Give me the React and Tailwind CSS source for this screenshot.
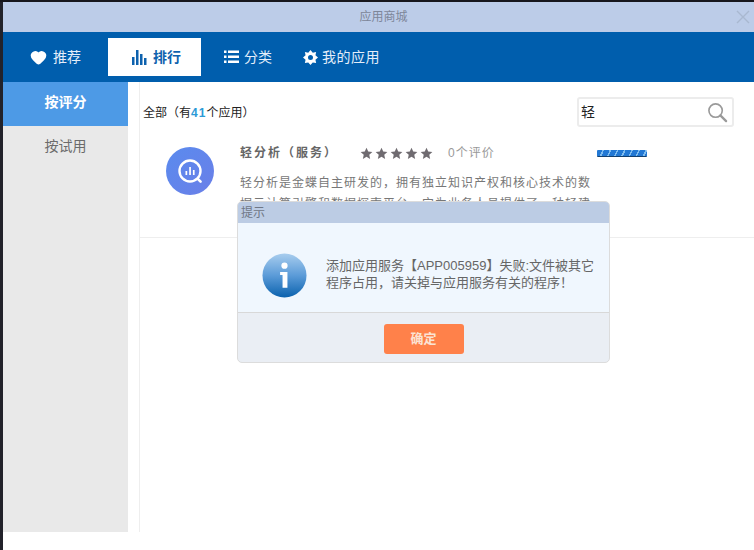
import React from "react";
import { Heart } from "lucide-react";

function Star() {
  return (
    <svg width="13" height="13" viewBox="0 0 24 24" className="block">
      <path d="M12 1.500l3.200 7 7.600.8-5.700 5.100 1.600 7.600L12 18.100 5.300 22l1.600-7.600L1.200 9.300l7.600-.8z" fill="#6f6b70" />
    </svg>
  );
}

function Gear() {
  return (
    <svg width="15" height="15" viewBox="0 0 24 24">
      <path
        fillRule="evenodd"
        fill="#fff"
        d="M12 0l3.600 4.200 5.400-1.100-1.100 5.300L24 12l-4.100 3.600 1.100 5.300-5.400-1.100L12 24l-3.600-4.200-5.400 1.100 1.100-5.300L0 12l4.100-3.600L3 3.100l5.400 1.100zM12 8a4 4 0 100 8 4 4 0 000-8z"
      />
    </svg>
  );
}

function ListIcon() {
  return (
    <svg width="15" height="14" viewBox="0 0 15 14" fill="#fff">
      <rect x="0" y="0.500" width="2.500" height="2.500" />
      <rect x="4" y="0.500" width="11" height="2.500" />
      <rect x="0" y="5.500" width="2.500" height="2.500" />
      <rect x="4" y="5.500" width="11" height="2.500" />
      <rect x="0" y="10.500" width="2.500" height="2.500" />
      <rect x="4" y="10.500" width="11" height="2.500" />
    </svg>
  );
}

function BarsIcon() {
  return (
    <svg width="15" height="16" viewBox="0 0 15 16" fill="#0e62ae">
      <rect x="0" y="8" width="2.500" height="8" />
      <rect x="4" y="1" width="2.500" height="15" />
      <rect x="8" y="5" width="2.500" height="11" />
      <rect x="12" y="9" width="2.500" height="7" />
    </svg>
  );
}

function AppLogo() {
  return (
    <svg width="48" height="48" viewBox="0 0 48 48">
      <defs>
        <linearGradient id="lg" x1="0" y1="0" x2="1" y2="1">
          <stop offset="0" stopColor="#5a8bee" />
          <stop offset="1" stopColor="#6a7fe8" />
        </linearGradient>
      </defs>
      <circle cx="24" cy="24" r="24" fill="url(#lg)" />
      <circle cx="24" cy="24" r="10.500" fill="none" stroke="#fff" strokeWidth="2.400" />
      <path d="M31.800 31.800l2.800 2.800" stroke="#fff" strokeWidth="2.600" strokeLinecap="round" />
      <rect x="19.500" y="24" width="1.700" height="4" fill="#fff" />
      <rect x="23.200" y="20" width="1.700" height="8" fill="#fff" />
      <rect x="26.900" y="23" width="1.700" height="5" fill="#fff" />
    </svg>
  );
}

function InfoIcon() {
  return (
    <svg width="45" height="45" viewBox="0 0 46 46" className="shrink-0">
      <defs>
        <linearGradient id="ig" x1="0" y1="0" x2="0" y2="1">
          <stop offset="0" stopColor="#a8cdee" />
          <stop offset="0.500" stopColor="#5b9bd8" />
          <stop offset="1" stopColor="#0b62ae" />
        </linearGradient>
      </defs>
      <circle cx="23" cy="23" r="22.500" fill="url(#ig)" />
      <circle cx="23" cy="13" r="3.200" fill="#fff" />
      <path d="M18.500 19.500h7.500v16h-5v-13h-2.500z" fill="#fff" />
    </svg>
  );
}

function Progress() {
  return (
    <div className="h-[7px] w-[50px] rounded-[1px] border-b border-b-[#12406f] bg-[repeating-linear-gradient(115deg,#2278d4_0px,#2278d4_5px,#7fbcee_5px,#7fbcee_6.500px)]" />
  );
}

function Tab({ icon, label, active, className }) {
  return (
    <div
      className={`flex h-[38px] shrink-0 items-center whitespace-nowrap text-[14px] ${
        active ? "bg-white font-bold text-[#0e62ae]" : "text-[#e4eefa]"
      } ${className}`}
    >
      {icon}
      <span>{label}</span>
    </div>
  );
}

export default function App() {
  return (
    <div
      className="relative h-[550px] w-[754px] overflow-hidden bg-white"
      style={{ fontFamily: '"Liberation Sans","Noto Sans CJK SC",sans-serif' }}
    >
      <div className="h-[2px] bg-[#16161c]" />
      <div className="flex h-[548px]">
        <div className="w-[3px] bg-[#22222a]" />
        <div className="flex min-w-0 flex-1 flex-col">
          <div className="relative flex h-[30px] items-center justify-center bg-[#bccce8] pl-[10px] text-[12px] text-[#7d8698]">
            应用商城
            <svg width="14" height="14" viewBox="0 0 14 14" className="absolute right-[4px] top-[8px]">
              <path d="M1 1l12 12M13 1L1 13" stroke="#a9b8d0" strokeWidth="1.400" />
            </svg>
          </div>
          <div className="flex h-[50px] items-end bg-[#005ead] pb-[6px]">
            <Tab
              className="ml-[27px] gap-[6px]"
              icon={<Heart size={17} fill="#fff" stroke="#fff" />}
              label="推荐"
            />
            <Tab className="ml-[27px] w-[93px] justify-center gap-[6px] pl-[4px]" active icon={<BarsIcon />} label="排行" />
            <Tab className="ml-[23px] gap-[5px]" icon={<ListIcon />} label="分类" />
            <Tab className="ml-[31px] gap-[4px] tracking-[0.5px]" icon={<Gear />} label="我的应用" />
          </div>
          <div className="flex h-[450px]">
            <div className="flex w-[125px] flex-col bg-[#e9e9e9]">
              <div className="flex h-[44px] items-center justify-center bg-[#4d9ae6] pb-[4px] text-[14px] font-bold text-white">
                按评分
              </div>
              <div className="flex h-[40px] items-center justify-center text-[14px] text-[#6b6b6b]">按试用</div>
            </div>
            <div className="ml-[11px] min-w-0 flex-1 border-l border-l-[#eeeeee]">
              <div className="flex h-[59px] items-start justify-between pl-[3px] pr-[20px] pt-[15px]">
                <div className="mt-[7px] text-[12px] leading-[18px] text-[#222]">
                  全部（有<span className="font-bold tracking-[1px] text-[#2b9ad6]">41</span>个应用）
                </div>
                <div className="flex h-[30px] w-[157px] items-center justify-between rounded-[3px] border-2 border-[#ececec] pl-[2px] pr-[4px] text-[14px] text-[#222]">
                  <span>轻</span>
                  <svg width="21" height="21" viewBox="0 0 22 22" fill="none" stroke="#9a9a9a">
                    <circle cx="9" cy="9" r="7" strokeWidth="1.700" />
                    <path d="M14 14l6 6" strokeWidth="2.400" strokeLinecap="round" />
                  </svg>
                </div>
              </div>
              <div className="flex h-[97px] border-b border-b-[#eeeeee] pl-[26px] pr-[10px]">
                <div className="shrink-0 pt-[6px]">
                  <AppLogo />
                </div>
                <div className="ml-[26px] min-w-0 flex-1">
                  <div className="flex h-[24px] items-center text-[12px]">
                    <span className="w-[120px] font-bold tracking-[2px] text-[#666]">轻分析（服务）</span>
                    <div className="flex gap-[2px]">
                      <Star />
                      <Star />
                      <Star />
                      <Star />
                      <Star />
                    </div>
                    <span className="ml-[15px] tracking-[1px] text-[#999]">0个评价</span>
                    <div className="ml-[102px]">
                      <Progress />
                    </div>
                  </div>
                  <p className="mt-[8px] w-[352px] text-[12px] leading-[21px] tracking-[1px] text-[#777]">
                    轻分析是金蝶自主研发的，拥有独立知识产权和核心技术的数据云计算引擎和数据探索平台，它为业务人员提供了一种轻建
                  </p>
                </div>
              </div>
            </div>
          </div>
        </div>
      </div>

      <div className="absolute left-[237px] top-[201px] w-[373px] overflow-hidden rounded-[5px] border border-[#dcdcdc] bg-[#eaeef4]">
        <div className="flex h-[21px] items-center bg-[#bccce4] pl-[3px] text-[12px] text-[#6f7786]">提示</div>
        <div className="flex h-[90px] items-center border-b border-b-[#d8d8d8] bg-[#f0f7fe] pl-[24px] pt-[16px]">
          <InfoIcon />
          <p className="-mt-[3px] ml-[19px] w-[275px] text-[13px] leading-[17px] text-[#666]">
            添加应用服务【APP005959】失败:文件被其它程序占用，请关掉与应用服务有关的程序！
          </p>
        </div>
        <div className="flex h-[49px] items-center justify-center pt-[3px]">
          <div className="flex h-[30px] w-[80px] items-center justify-center rounded-[3px] bg-[#ff814a] text-[13px] font-bold text-[#fbe3d4]">
            确定
          </div>
        </div>
      </div>
    </div>
  );
}
